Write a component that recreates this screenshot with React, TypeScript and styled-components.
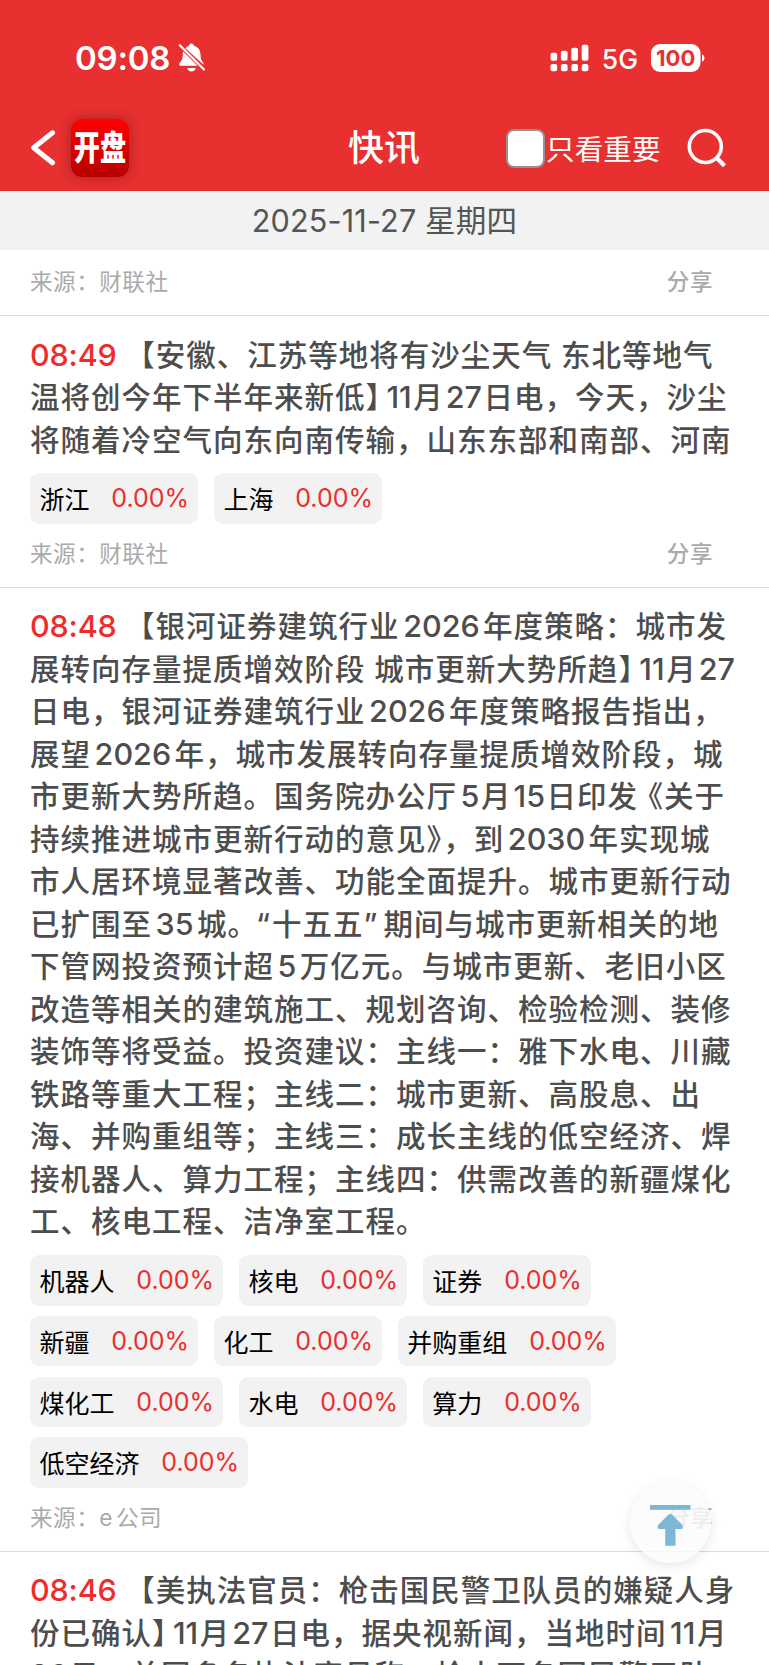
import React from "react";
import styled, { createGlobalStyle } from "styled-components";

const Global = createGlobalStyle`
  * { box-sizing: border-box; }
  body { margin: 0; background: #fff; }
`;

const Page = styled.div`
  position: relative;
  width: 769px;
  height: 1665px;
  overflow: hidden;
  background: #fff;
  color: #4d4d4d;
  font-family: Inter, "Noto Sans CJK SC", sans-serif;
  text-spacing-trim: space-all;
  text-autospace: no-autospace;
`;

const Header = styled.header`
  height: 191px;
  background: #e83030;
  color: #fff;
`;

const StatusBar = styled.div`
  display: flex;
  align-items: center;
  justify-content: space-between;
  height: 105px;
  padding: 10px 64.5px 0 75px;
`;

const StatusGroup = styled.div<{ $gap: number }>`
  display: flex;
  align-items: center;
  gap: ${(p) => p.$gap}px;
`;

const Clock = styled.span`
  font-size: 33px;
  font-weight: 570;
  letter-spacing: -0.2px;
  line-height: 40px;
`;

const Network = styled.span`
  font-size: 26.5px;
  font-weight: 450;
  line-height: 30px;
  transform: translateY(1px);
`;

const NavBar = styled.div`
  display: grid;
  grid-template-columns: 1fr auto 1fr;
  align-items: center;
  height: 86px;
  padding: 0 42px 0 30px;
`;

const NavLeft = styled.div`
  display: flex;
  align-items: center;
  gap: 15px;
`;

const AppIcon = styled.div`
  display: flex;
  align-items: center;
  justify-content: center;
  width: 58px;
  height: 58px;
  border-radius: 11px;
  background: linear-gradient(#ff0000, #b80000);
  box-shadow: 0 0 12px rgba(90, 20, 20, 0.5);
`;

const AppIconText = styled.span`
  font-size: 34px;
  font-weight: 900;
  line-height: 60px;
  transform: scaleX(0.77);
  white-space: nowrap;
`;

const Title = styled.h1`
  margin: 0 0 0 11px;
  font-size: 36px;
  font-weight: 500;
  line-height: 50px;
`;

const NavRight = styled.div`
  display: flex;
  align-items: center;
  justify-content: flex-end;
`;

const CheckBox = styled.span`
  width: 39px;
  height: 39px;
  border: 2px solid #9a8f8f;
  border-radius: 8px;
  background: #fff;
`;

const CheckLabel = styled.span`
  margin: 3px 26.5px 0 1.5px;
  font-size: 28.6px;
  line-height: 40px;
`;

const DateBar = styled.div`
  height: 58.5px;
  background: #f2f2f2;
  color: #555;
  font-size: 30.6px;
  line-height: 60px;
  letter-spacing: 0.15px;
  text-align: center;
`;

const Item = styled.article<{ $top?: number }>`
  padding: ${(p) => p.$top ?? 17.5}px 30px 0;
  border-bottom: 1px solid #dcdcdc;
`;

const Line = styled.div`
  height: 42.53px;
  font-size: 29.5px;
  font-weight: 500;
  letter-spacing: 1px;
  line-height: 42.53px;
  white-space: pre;
`;

const Time = styled.span`
  margin-right: 8.5px;
  color: #f02b2b;
  font-size: 30.5px;
  letter-spacing: -0.15px;
`;

const Num = styled.span<{ $l: number; $r: number }>`
  margin: 0 ${(p) => p.$r}px 0 ${(p) => p.$l}px;
  font-size: 30.5px;
  letter-spacing: 0;
`;

const Mark = styled.span<{ $l?: number; $r?: number }>`
  margin: 0 ${(p) => p.$r ?? 0}px 0 ${(p) => p.$l ?? 0}px;
`;

const Chips = styled.div`
  display: flex;
  flex-wrap: wrap;
  gap: 10.2px 16px;
  padding: 12.2px 90px 0 0;
`;

const Chip = styled.div`
  display: flex;
  align-items: center;
  height: 50.5px;
  padding: 0 8.8px 0 9.5px;
  border-radius: 9px;
  background: #f2f2f2;
  color: #000;
  font-size: 25px;
  white-space: nowrap;
`;

const Pct = styled.span`
  margin-left: 21.8px;
  color: #ea2f2f;
`;

const Meta = styled.div`
  display: flex;
  justify-content: space-between;
  height: 63px;
  padding-right: 26px;
  color: #aaa;
  font-size: 22.6px;
  letter-spacing: 0.5px;
  line-height: 60px;
`;

const Share = styled.span`
  font-weight: 500;
`;

const TopButton = styled.button`
  position: absolute;
  left: 630px;
  top: 1482px;
  width: 81px;
  height: 81px;
  padding: 0;
  border: 0;
  border-radius: 50%;
  background: rgba(251, 251, 251, 0.82);
  box-shadow: 0 3px 12px rgba(0, 0, 0, 0.1);
`;

// Adds the small gaps around digits and tightens punctuation that faces them.
const renderText = (text: string) => {
  const parts = text.split(/(\d+|】(?=\d)|》(?=，)|《|“|”|e(?=公))/).filter(Boolean);
  return parts.map((part, i) => {
    if (/^\d+$/.test(part)) {
      const prev = parts[i - 1];
      const next = parts[i + 1] ?? "";
      const left = !prev ? 0 : prev.endsWith("月") ? 2 : 3.6;
      const right = /^[月日]/.test(next) ? 1.5 : 3.4;
      return (
        <Num key={i} $l={left} $r={right}>
          {part}
        </Num>
      );
    }
    if (part === "】") return <Mark key={i} $r={-13.2}>{part}</Mark>;
    if (part === "》") return <Mark key={i} $r={-13.8}>{part}</Mark>;
    if (part === "《") return <Mark key={i} $l={-4.5}>{part}</Mark>;
    if (part === "“") return <Mark key={i} $l={-2} $r={1}>{part}</Mark>;
    if (part === "”") return <Mark key={i} $r={5}>{part}</Mark>;
    if (part === "e") return <Mark key={i} $r={3}>{part}</Mark>;
    return part;
  });
};

type News = {
  time: string;
  lines: string[];
  tags: string[];
  source?: string;
};

const news: News[] = [
  {
    time: "08:49",
    lines: [
      "【安徽、江苏等地将有沙尘天气 东北等地气",
      "温将创今年下半年来新低】11月27日电，今天，沙尘",
      "将随着冷空气向东向南传输，山东东部和南部、河南",
    ],
    tags: ["浙江", "上海"],
    source: "财联社",
  },
  {
    time: "08:48",
    lines: [
      "【银河证券建筑行业2026年度策略：城市发",
      "展转向存量提质增效阶段 城市更新大势所趋】11月27",
      "日电，银河证券建筑行业2026年度策略报告指出，",
      "展望2026年，城市发展转向存量提质增效阶段，城",
      "市更新大势所趋。国务院办公厅5月15日印发《关于",
      "持续推进城市更新行动的意见》，到2030年实现城",
      "市人居环境显著改善、功能全面提升。城市更新行动",
      "已扩围至35城。“十五五”期间与城市更新相关的地",
      "下管网投资预计超5万亿元。与城市更新、老旧小区",
      "改造等相关的建筑施工、规划咨询、检验检测、装修",
      "装饰等将受益。投资建议：主线一：雅下水电、川藏",
      "铁路等重大工程；主线二：城市更新、高股息、出",
      "海、并购重组等；主线三：成长主线的低空经济、焊",
      "接机器人、算力工程；主线四：供需改善的新疆煤化",
      "工、核电工程、洁净室工程。",
    ],
    tags: ["机器人", "核电", "证券", "新疆", "化工", "并购重组", "煤化工", "水电", "算力", "低空经济"],
    source: "e公司",
  },
  {
    time: "08:46",
    lines: [
      "【美执法官员：枪击国民警卫队员的嫌疑人身",
      "份已确认】11月27日电，据央视新闻，当地时间11月",
      "26日，美国多名执法官员称，枪击两名国民警卫队",
    ],
    tags: [],
  },
];

const BellOff = () => (
  <svg width="28" height="30" viewBox="0 0 28 30" fill="#fff">
    <path d="M7.5 5.2C8.7 3.6 10 3 11.1 2.7C11.3 1.3 12.2.6 13.5.6S15.7 1.3 15.9 2.7C20 3.7 22.3 7 22.5 11.5C22.6 14.5 23 16.5 24.3 18.4L25.6 20.4V21.8Z" />
    <path d="M5.2 8.6 19.6 22.7H2.6C1.3 22.7.8 21.2 1.6 20L3 18.2C4.5 16 4.7 14 4.8 11.4C4.8 10.4 4.9 9.5 5.2 8.6Z" />
    <path d="M9.3 25H17.7C17.4 27.2 15.7 28.4 13.5 28.4S9.6 27.2 9.3 25Z" />
    <path d="M1.8 2.2 26 26.6" stroke="#fff" strokeWidth="2.1" strokeLinecap="round" />
  </svg>
);

const Signal = () => (
  <svg width="39" height="28" viewBox="0 0 39 28" fill="#fff">
    {[8.7, 6.7, 3.7, 0.7].map((y, i) => (
      <React.Fragment key={y}>
        <rect x={0.5 + i * 10.4} y={y} width="6.7" height={16.7 - y} rx="2" />
        <rect x={0.5 + i * 10.4} y="20" width="6.7" height="7.2" rx="2" />
      </React.Fragment>
    ))}
  </svg>
);

const Battery = () => (
  <svg width="54" height="28" viewBox="0 0 54 28">
    <rect x="0" y="0" width="49.5" height="28" rx="9" fill="#fff" />
    <path d="M51 10.5C54.3 11.5 54.3 16.5 51 17.5Z" fill="#fff" />
    <text x="24.7" y="21.7" textAnchor="middle" fontFamily="Inter" fontSize="22" fontWeight="700" fill="#e83030">
      100
    </text>
  </svg>
);

const Back = () => (
  <svg width="26" height="38" viewBox="0 0 26 38" fill="none" stroke="#fff" strokeWidth="5" strokeLinecap="round" strokeLinejoin="round">
    <path d="M22.5 3.8 3.7 18.7 22.5 33.8" />
  </svg>
);

const Search = () => (
  <svg width="40" height="40" viewBox="0 0 40 40" fill="none" stroke="#fff" strokeWidth="3.6">
    <circle cx="18.3" cy="18.5" r="16" />
    <path d="M29.3 29.5 37.5 37.7" strokeWidth="4.3" />
  </svg>
);

const ToTop = () => (
  <svg width="81" height="81" viewBox="0 0 81 81" fill="#7db7d8">
    <rect x="20" y="23" width="40.5" height="4.8" />
    <path d="M38.3 32.8Q40.2 31 42.1 32.8L51.8 42.3Q53.7 44.5 52.2 47H45.5V63.7H35.2V47H28.5Q26.7 44.5 28.8 42.3Z" />
  </svg>
);

const SourceRow = ({ source }: { source: string }) => (
  <Meta>
    <span>来源：{renderText(source)}</span>
    <Share>分享</Share>
  </Meta>
);

export default function App() {
  return (
    <Page>
      <Global />
      <Header>
        <StatusBar>
          <StatusGroup $gap={8}>
            <Clock>09:08</Clock>
            <BellOff />
          </StatusGroup>
          <StatusGroup $gap={12.5}>
            <Signal />
            <Network>5G</Network>
            <Battery />
          </StatusGroup>
        </StatusBar>
        <NavBar>
          <NavLeft>
            <Back />
            <AppIcon>
              <AppIconText>开盘</AppIconText>
            </AppIcon>
          </NavLeft>
          <Title>快讯</Title>
          <NavRight>
            <CheckBox />
            <CheckLabel>只看重要</CheckLabel>
            <Search />
          </NavRight>
        </NavBar>
      </Header>
      <DateBar>2025-11-27 星期四</DateBar>
      <Item $top={2.5}>
        <SourceRow source="财联社" />
      </Item>
      {news.map((n) => (
        <Item key={n.time}>
          {n.lines.map((l, i) => (
            <Line key={i}>
              {i === 0 && <Time>{n.time}</Time>}
              {renderText(l)}
            </Line>
          ))}
          {n.tags.length > 0 && (
            <Chips>
              {n.tags.map((t) => (
                <Chip key={t}>
                  {t}
                  <Pct>0.00%</Pct>
                </Chip>
              ))}
            </Chips>
          )}
          {n.source && <SourceRow source={n.source} />}
        </Item>
      ))}
      <TopButton aria-label="top">
        <ToTop />
      </TopButton>
    </Page>
  );
}
